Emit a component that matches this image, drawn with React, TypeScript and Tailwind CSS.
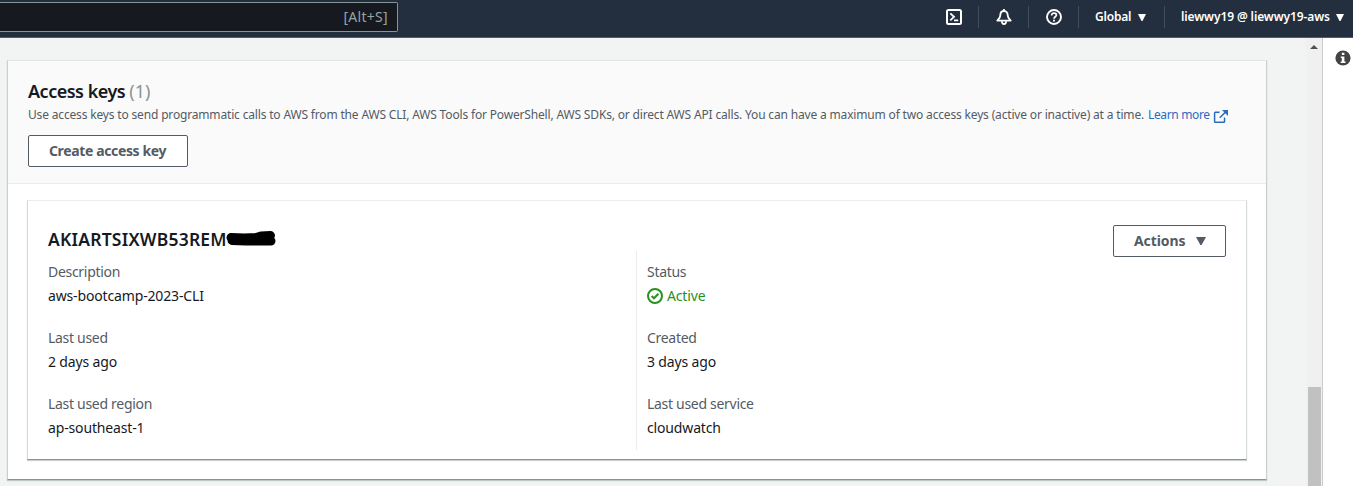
import React from "react";

function Caret({ className }: { className: string }) {
  return (
    <svg viewBox="0 0 10 8" preserveAspectRatio="none" className={className} fill="currentColor">
      <path d="M0 0h10L5.6 8h-1.2z" />
    </svg>
  );
}

function TopBar() {
  return (
    <header className="flex h-[38px] shrink-0 items-start justify-between border-b border-[#545b64] bg-[#232f3e] text-white">
      <div className="mt-[2px] flex h-[30px] w-[398px] items-center justify-end rounded-r-[2px] border border-l-0 border-[#879596] bg-[#16191f] pr-[9px]">
        <span className="text-[14px] leading-[20px] tracking-[0.3px] text-[#95a5a6]">[Alt+S]</span>
      </div>
      <nav className="mt-[6px] flex h-[22px] items-center">
        <div className="flex h-full w-[49px] items-center justify-center">
          <svg viewBox="0 0 16 16" className="h-4 w-4" fill="none" stroke="currentColor" strokeWidth="2">
            <rect x="1" y="1" width="14" height="14" rx="1.5" />
            <path d="M4.3 4.3L8 7.8L4.3 11.3M8 11.4h4.2" strokeWidth="1.8" />
          </svg>
        </div>
        <div className="flex h-full w-[50px] items-center justify-center border-l border-[#414d5c]">
          <svg viewBox="0 0 16 16" className="h-4 w-4" fill="none" stroke="currentColor" strokeWidth="1.8" strokeLinejoin="round">
            <path d="M8 0v2M8 2C5.6 2 4.3 3.8 4.3 6.3C4.3 8.6 3.2 9.4 1.3 11.6H14.7C12.8 9.4 11.7 8.6 11.7 6.3C11.7 3.8 10.4 2 8 2Z" />
            <path d="M5.9 12.2C5.9 14 6.9 15 8 15S10.1 14 10.1 12.2" />
          </svg>
        </div>
        <div className="flex h-full w-[50px] items-center justify-center border-l border-[#414d5c]">
          <svg viewBox="0 0 16 16" className="h-4 w-4" fill="none" stroke="currentColor" strokeWidth="1.9">
            <circle cx="8" cy="8" r="7" />
            <path d="M5.6 6.4C5.6 4.9 6.6 4.1 8 4.1S10.4 4.9 10.4 6.1C10.4 7.8 8 7.7 8 9.7" strokeWidth="1.7" />
            <path d="M8 10.7v1.8" />
          </svg>
        </div>
        <div className="flex h-full w-[86px] items-center border-l border-[#414d5c] pl-[16px]">
          <span className="w-[43px] whitespace-nowrap text-[12px] font-semibold leading-[20px] tracking-[-0.2px]">Global</span>
          <Caret className="h-[7px] w-[8px]" />
        </div>
        <div className="flex h-full w-[189px] items-center border-l border-[#414d5c] pl-[16px]">
          <span className="w-[155px] whitespace-nowrap text-[12px] font-semibold leading-[20px] tracking-[-0.11px]">liewwy19 @ liewwy19-aws</span>
          <Caret className="h-[7px] w-[8px]" />
        </div>
      </nav>
    </header>
  );
}

function Field({ label, children }: { label: string; children: React.ReactNode }) {
  return (
    <div className="flex flex-col gap-[2px] text-[14px] leading-[22px]">
      <dt className="tracking-[-0.3px] text-[#545b64]">{label}</dt>
      <dd className="flex items-center tracking-[-0.15px] text-[#16191f]">{children}</dd>
    </div>
  );
}

function KeyCard() {
  return (
    <article className="mx-[19px] mt-[16px] flex h-[260px] flex-col border border-x-[#d5dbdb] border-b-[#879596] border-t-[#eaeded] bg-white shadow-[0_1px_1px_0_rgba(0,28,36,0.2)]">
      <div className="flex h-[50px] items-start justify-between px-5 pt-6">
        <div className="flex items-center pt-[3px]">
          <h3 className="w-[178px] whitespace-nowrap text-[17.5px] font-semibold leading-[22px] tracking-[0.22px] text-[#16191f]">AKIARTSIXWB53REM</h3>
          <svg viewBox="0 0 50 18" className="h-[18px] w-[50px]">
            <path d="M5 7.5L18 8L30 7.5L35 6L44.5 5.5M6 10.5L20 11L33 11L45 11M6 9L22 10L43 9" fill="none" stroke="#000" strokeWidth="9" strokeLinecap="round" strokeLinejoin="round" />
          </svg>
        </div>
        <button className="flex h-8 w-[113px] items-center rounded-[2px] border border-[#545b64] pb-[2px] pl-5 text-[14px] font-bold text-[#545b64]">
          <span className="w-[62px] text-left tracking-[-0.1px]">Actions</span>
          <Caret className="mt-[1px] h-[8px] w-[10px]" />
        </button>
      </div>
      <dl className="flex h-[199px]">
        <div className="flex w-[608px] flex-col gap-5 pl-5 pt-[10px]">
          <Field label="Description">aws-bootcamp-2023-CLI</Field>
          <Field label="Last used">2 days ago</Field>
          <Field label="Last used region">ap-southeast-1</Field>
        </div>
        <div className="flex flex-1 flex-col gap-5 border-l border-[#eaeded] pl-[10px] pt-[10px]">
          <Field label="Status">
            <svg viewBox="0 0 16 16" className="mr-1 h-4 w-4" fill="none" stroke="#2a9020" strokeWidth="2">
              <circle cx="8" cy="8" r="7" />
              <path d="M4.6 8.1L7 10.3L11.4 5.8" />
            </svg>
            <span className="text-[#2a9020]">Active</span>
          </Field>
          <Field label="Created">3 days ago</Field>
          <Field label="Last used service">cloudwatch</Field>
        </div>
      </dl>
    </article>
  );
}

export default function App() {
  return (
    <div className="flex h-[486px] w-[1353px] flex-col overflow-hidden bg-[#f2f3f3] font-['Noto_Sans','Open_Sans',sans-serif]">
      <TopBar />
      <div className="flex min-h-0 flex-1">
        <main className="w-[1306px] pl-[7px] pt-[22px]">
          <section className="h-[420px] w-[1260px] border border-x-[#c9cfcf] border-b-[#879596] border-t-[#e1e6e6] bg-white shadow-[0_1px_1px_0_rgba(0,28,36,0.2)]">
            <div className="h-[123px] border-b border-[#eaeded] bg-[#fafafa] px-5 pt-[18px]">
              <h2 className="whitespace-nowrap text-[18px] font-semibold leading-[24px] tracking-[-0.5px] text-[#16191f]">
                Access keys <span className="font-normal tracking-normal text-[#879596]">(1)</span>
              </h2>
              <p className="mt-[2px] flex h-[20px] items-center whitespace-nowrap text-[12px] text-[#545b64]">
                <span className="w-[1120px] tracking-[-0.166px]">Use access keys to send programmatic calls to AWS from the AWS CLI, AWS Tools for PowerShell, AWS SDKs, or direct AWS API calls. You can have a maximum of two access keys (active or inactive) at a time.</span>
                <a className="w-[65px] tracking-[-0.35px] text-[#2a6cc0]">Learn more</a>
                <svg viewBox="0 0 16 16" className="mt-[3px] h-[15px] w-[15px]" fill="none" stroke="#2a6cc0" strokeWidth="1.6">
                  <path d="M14.6 2L7.2 9.4M7 3.5H2.5Q1.7 3.5 1.7 4.3V13.2Q1.7 14 2.5 14H11.5Q12.3 14 12.3 13.2V9" />
                  <path d="M9.6 1H16V7.4z" fill="#2a6cc0" stroke="none" />
                </svg>
              </p>
              <button className="mt-[10px] flex h-8 w-[160px] items-center whitespace-nowrap rounded-[2px] border border-[#545b64] bg-white pb-[2px] pl-5 text-[14px] font-bold tracking-[-0.37px] text-[#545b64]">
                Create access key
              </button>
            </div>
            <KeyCard />
          </section>
        </main>
        <div className="flex w-4 flex-col items-center bg-[#f0f0f0]">
          <svg viewBox="0 0 8 4" className="mt-[7px] h-1 w-2" fill="#505050">
            <path d="M4 0L8 4H0z" />
          </svg>
          <div className="ml-[1px] mt-[338px] w-[13px] flex-1 bg-[#c1c1c1]" />
        </div>
        <aside className="flex flex-1 justify-end border-l border-[#c8cccc] bg-white pr-[2px] pt-[12px]">
          <svg viewBox="0 0 16 16" className="h-4 w-4">
            <circle cx="8" cy="8" r="7.6" fill="#444" />
            <path d="M6.8 2.8h2.6v2.2H6.8zM5.8 6.4h3.6v5h1.1v1.5H5.7v-1.5h1.1V7.9h-1z" fill="#fff" />
          </svg>
        </aside>
      </div>
    </div>
  );
}
